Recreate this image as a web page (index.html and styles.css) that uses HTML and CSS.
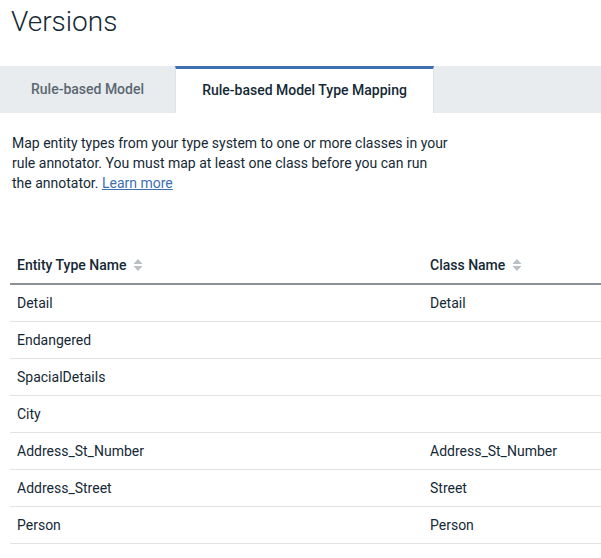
FILE: index.html
```html
<!DOCTYPE html>
<html>
<head>
<meta charset="utf-8">
<link rel="stylesheet" href="styles.css">
</head>
<body>
<h1 class="title">Versions</h1>
<div class="tabs">
  <div class="tab">Rule-based Model</div>
  <div class="tab tab-active">Rule-based Model Type Mapping</div>
  <div class="tab-fill"></div>
</div>
<p class="desc">Map entity types from your type system to one or more classes in your rule annotator. You must map at least one class before you can run the&nbsp;annotator. <a href="#" class="link">Learn more</a></p>
<table class="table">
  <thead>
    <tr>
      <th class="col1">Entity Type Name <span class="sort"><svg width="10" height="14" viewBox="0 0 10 14"><path d="M5 1 L9.5 6 H0.5 Z" fill="#b9bfc4"/><path d="M5 13 L9.5 8 H0.5 Z" fill="#b9bfc4"/></svg></span></th>
      <th class="col2">Class Name <span class="sort"><svg width="10" height="14" viewBox="0 0 10 14"><path d="M5 1 L9.5 6 H0.5 Z" fill="#b9bfc4"/><path d="M5 13 L9.5 8 H0.5 Z" fill="#b9bfc4"/></svg></span></th>
    </tr>
  </thead>
  <tbody>
    <tr><td>Detail</td><td>Detail</td></tr>
    <tr><td>Endangered</td><td></td></tr>
    <tr><td>SpacialDetails</td><td></td></tr>
    <tr><td>City</td><td></td></tr>
    <tr><td>Address_St_Number</td><td>Address_St_Number</td></tr>
    <tr><td>Address_Street</td><td>Street</td></tr>
    <tr><td>Person</td><td>Person</td></tr>
  </tbody>
</table>
</body>
</html>
```
FILE: styles.css
```css
* { box-sizing: border-box; }
html, body { margin: 0; padding: 0; background: #fff; }
body {
  font-family: Roboto, "Liberation Sans", sans-serif;
  color: #152935;
  font-size: 14px;
  width: 601px;
  overflow: hidden;
}
.title {
  margin: 0;
  padding: 4px 0 0 11px;
  height: 66px;
  font-size: 28px;
  font-weight: 300;
  line-height: 36px;
  color: #152935;
}
.tabs {
  display: flex;
  height: 47px;
  background: #e9ecee;
}
.tab {
  width: 175px;
  display: flex;
  align-items: center;
  justify-content: center;
  font-size: 14px;
  font-weight: 500;
  color: #5a6872;
  padding-bottom: 2px;
}
.tab-active {
  width: 259px;
  background: #fff;
  border-top: 3px solid #3d70b2;
  border-left: 1px solid #dfe3e6;
  border-right: 1px solid #dfe3e6;
  color: #152935;
  padding-bottom: 3px;
}
.tab-fill { flex: 1; }
.desc {
  margin: 20px 0 0 12px;
  width: 442px;
  line-height: 20px;
  font-size: 14px;
  color: #152935;
}
.link { color: #3d70b2; }
.table {
  margin: 54px 0 0 10px;
  width: 591px;
  border-collapse: collapse;
}
.table th {
  text-align: left;
  font-weight: 500;
  height: 37px;
  padding: 0 7px;
  border-bottom: 2px solid #8d9196;
  vertical-align: middle;
}
.col1 { width: 413px; }
.sort { display: inline-block; vertical-align: -2px; margin-left: 3px; }
.sort svg { display: block; }
.table td {
  height: 37px;
  padding: 0 7px;
  border-bottom: 1px solid #dfe3e6;
  vertical-align: middle;
}
```
